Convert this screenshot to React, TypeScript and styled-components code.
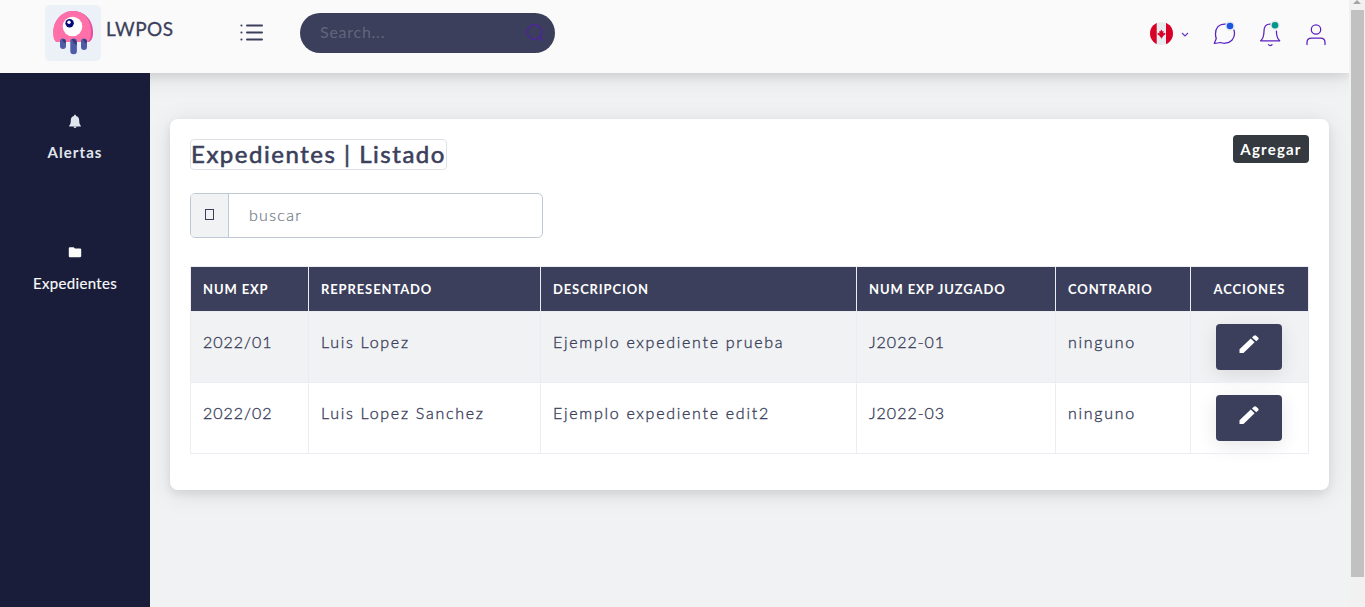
import React from "react";
import styled, { createGlobalStyle, css } from "styled-components";

const GlobalStyle = createGlobalStyle`
  * { box-sizing: border-box; }
  html, body { margin: 0; padding: 0; }
  body {
    background: #f1f2f4;
    color: #3b3f5c;
    font-family: Lato, "Liberation Sans", sans-serif;
    font-size: 16px;
    overflow: hidden;
  }
`;

const Window = styled.div`
  display: flex;
  width: 1365px;
  height: 607px;
  overflow: hidden;
`;

const Page = styled.div`
  display: flex;
  flex-direction: column;
  width: 1349px;
  height: 607px;
  overflow: hidden;
`;

const elevated = css`
  box-shadow: 0 4px 8px 0 rgba(0, 0, 0, 0.07), 0 4px 24px 0 rgba(0, 0, 0, 0.1);
`;

const Header = styled.header`
  display: flex;
  align-items: flex-start;
  flex: none;
  height: 73px;
  background: #fafafa;
  padding: 5px 22px 0 45px;
  ${elevated}
`;

const Brand = styled.div`
  display: flex;
  width: 195px;
`;

const LogoTile = styled.div`
  width: 56px;
  height: 56px;
  border-radius: 5px;
  background: #ebf1f6;
`;

const BrandName = styled.span`
  margin: 11px 0 0 5px;
  font-size: 19px;
  line-height: 26px;
  letter-spacing: 0.5px;
  -webkit-text-stroke: 0.3px #3b3f5c;
`;

const MenuToggle = styled.button`
  width: 24px;
  height: 20px;
  margin: 18px 36px 0 0;
  padding: 0;
  border: 0;
  background: none;
`;

const Search = styled.div`
  display: flex;
  align-items: center;
  justify-content: space-between;
  width: 255px;
  height: 40px;
  margin-top: 8px;
  padding: 0 11px 0 20px;
  border-radius: 20px;
  background: #3b3f5c;
  color: #60677b;
  font-size: 16px;
  letter-spacing: 0.75px;
  span { margin-top: -3px; }
`;

const Tools = styled.div`
  display: flex;
  align-items: center;
  height: 58px;
  margin-left: auto;
`;

const Tool = styled.div<{ $w: number; $gap: number }>`
  display: flex;
  justify-content: center;
  width: ${(p) => p.$w}px;
  margin-right: ${(p) => p.$gap}px;
`;

const Body = styled.div`
  display: flex;
  flex: 1;
`;

const Sidebar = styled.nav`
  position: relative;
  display: flex;
  flex-direction: column;
  align-items: center;
  width: 150px;
  background: #1a1d3a;
  padding-top: 41px;
`;

const NavItem = styled.a<{ $active?: boolean }>`
  display: flex;
  flex-direction: column;
  align-items: center;
  height: 131px;
  color: ${(p) => (p.$active ? "#e0e6ed" : "#fafafa")};
  font-size: 15px;
  font-weight: ${(p) => (p.$active ? 700 : 400)};
  letter-spacing: ${(p) => (p.$active ? 1.05 : 0.35)}px;
  line-height: 20px;
  -webkit-text-stroke: ${(p) => (p.$active ? 0 : 0.15)}px #fafafa;
  svg { margin-bottom: 13px; }
`;

const Main = styled.main`
  flex: 1;
  padding: 46px 20px 0;
`;

const Card = styled.section`
  height: 371px;
  padding: 16px 20px 0;
  border-radius: 8px;
  background: #fff;
  ${elevated}
`;

const CardHead = styled.div`
  display: flex;
  justify-content: space-between;
  align-items: flex-start;
  height: 58px;
`;

const Title = styled.h4`
  width: 257px;
  height: 31px;
  margin: 4px 0 0;
  border: 1px solid #dee2e6;
  border-radius: 4px;
  font-size: 24px;
  font-weight: 400;
  line-height: 28px;
  letter-spacing: 1.52px;
  white-space: nowrap;
  -webkit-text-stroke: 0.6px #3b3f5c;
`;

const AddButton = styled.button`
  width: 76px;
  height: 28px;
  padding: 0;
  border: 0;
  border-radius: 4px;
  background: #343a40;
  color: #fff;
  font: 700 15px/27px Lato, sans-serif;
  letter-spacing: 1.2px;
`;

const Filter = styled.div`
  display: flex;
  width: 353px;
  height: 45px;
  border: 1px solid #bfc9d4;
  border-radius: 5px;
  overflow: hidden;
`;

const FilterAddon = styled.span`
  display: flex;
  align-items: center;
  justify-content: center;
  width: 38px;
  border-right: 1px solid #bfc9d4;
  background: #f1f2f3;
`;

const MissingGlyph = styled.i`
  width: 9px;
  height: 11px;
  margin-top: -2px;
  border: 1px solid #3b3f5c;
`;

const FilterText = styled.span`
  padding-left: 20px;
  color: #6f7884;
  font-size: 16px;
  font-weight: 300;
  line-height: 42px;
  letter-spacing: 1.3px;
  -webkit-text-stroke: 0.2px #6f7884;
`;

const Table = styled.table`
  width: 1119px;
  margin-top: 28px;
  table-layout: fixed;
  border-collapse: collapse;
`;

const HeadCell = styled.th<{ $w: number; $center?: boolean }>`
  width: ${(p) => p.$w}px;
  height: 45px;
  padding: 0 12px 1px;
  border: 1px solid #ebedf2;
  background: #3b3f5c;
  color: #fff;
  font-size: 13px;
  font-weight: 700;
  letter-spacing: 0.88px;
  text-align: ${(p) => (p.$center ? "center" : "left")};
  white-space: nowrap;
`;

const Row = styled.tr`
  height: 71px;
  &:nth-child(odd) { background: #f1f2f3; }
`;

const Cell = styled.td<{ $numeric?: boolean }>`
  padding: 0 12px 11px;
  border: 1px solid #ebedf2;
  font-size: 16px;
  font-weight: 300;
  letter-spacing: ${(p) => (p.$numeric ? 0.98 : 1.72)}px;
  white-space: nowrap;
  -webkit-text-stroke: 0.35px #3b3f5c;
`;

const ActionCell = styled.td`
  padding: 0 2px 0 0;
  border: 1px solid #ebedf2;
`;

const EditButton = styled.button`
  display: block;
  width: 66px;
  height: 46px;
  margin: 0 auto;
  padding: 0 0 7px;
  border: 0;
  border-radius: 4px;
  background: #3b3f5c;
  box-shadow: 0 5px 20px 0 rgba(0, 0, 0, 0.1);
  line-height: 0;
`;

const Scrollbar = styled.div`
  display: flex;
  flex-direction: column;
  align-items: center;
  width: 16px;
  background: #f1f1f1;
`;

const ScrollArrow = styled.div`
  width: 0;
  height: 4px;
  margin-bottom: 6px;
  border: 4px solid transparent;
  border-top: 0;
  border-bottom-color: #a3a3a3;
`;

const ScrollThumb = styled.div`
  width: 13px;
  height: 567px;
  margin-left: 1px;
  background: #c1c1c1;
`;

const Logo = () => (
  <svg width="56" height="56" viewBox="0 0 56 56">
    <path d="M8.500 29C7.500 17 16 6 28 6s21 10 20 23c0 4-2 7-4 8H12c-3-1-3.500-5-3.500-8z" fill="#e44fa4" />
    <path d="M8.500 29C7.500 17 16 6 28 6c11 0 18 9 18 20 0 5-1 9-3 11H12c-3-1-3.500-5-3.500-8z" fill="#ff70a8" />
    <circle cx="27.500" cy="21.500" r="9.800" fill="#fff" />
    <circle cx="24.600" cy="18.200" r="4.200" fill="#070777" />
    <circle cx="24" cy="17.300" r="1.700" fill="#fff" />
    <path d="M15 36a3 2.500 0 0 1 6 0v5a3 3 0 0 1-6 0zM25.300 36a3.300 2.500 0 0 1 6.600 0v10a3.300 3.300 0 0 1-6.600 0zM36 36a3 2.500 0 0 1 6 0v6a3 3 0 0 1-6 0z" fill="#4f5ba8" />
    <path d="M17 34.500q4-1.500 4 3.500-3 0-4-3.500zM27 34q5-1 4.900 6-4-1-4.900-6zM38 34.200q4-1 4 4-3 0-4-4z" fill="#343d78" />
  </svg>
);

const ListIcon = () => (
  <svg width="24" height="20" fill="none" stroke="#3b3f5c" strokeWidth="2" strokeLinecap="round">
    <path d="M7 2.500h15M7 9.500h15M7 16.500h15M1.400 2.500h.1M1.400 9.500h.1M1.400 16.500h.1" />
  </svg>
);

const SearchIcon = () => (
  <svg width="18" height="18" fill="none" stroke="#4a2795" strokeWidth="1.600">
    <circle cx="8.500" cy="8" r="7.200" />
    <path d="m12.800 12 4.400 4.800" />
  </svg>
);

const Flag = () => (
  <svg width="24" height="24" viewBox="0 0 24 24">
    <clipPath id="disc"><circle cx="12.500" cy="11.500" r="11.500" /></clipPath>
    <g clipPath="url(#disc)">
      <path fill="#e8ecf0" d="M0 0h24v24H0z" />
      <path fill="#d80027" d="M0 0h7.700v24H0zM17 0h7v24h-7z" />
      <path fill="#d80027" d="m12.400 7.500 1.200 2 1-.5-.3 2.400 1.300-.7 1 1.300-2.800 2.300.2 1h-3.200l.2-1L8.200 12l1-1.300 1.300.7-.3-2.400 1 .5zM12 14h.8v2.500H12z" />
    </g>
  </svg>
);

const ChevronIcon = () => (
  <svg width="8" height="6" fill="none" stroke="#6a35c9" strokeWidth="1.200">
    <path d="m1 2 3 3 3-3" />
  </svg>
);

const ChatIcon = () => (
  <svg width="26" height="28" viewBox="0 0 26 28" fill="none" stroke="#5b21c0" strokeWidth="1.250" strokeLinejoin="round">
    <path d="M16 4H14C7.800 4 4.500 8 4.500 14c0 2 .2 3.200.8 4.500L3.300 23.500l6.200-1c1.500.7 3 .9 4.700.7 5.500-.4 9.300-4.200 9.300-9.700 0-1.600-.2-2.700-.8-4" />
    <circle cx="19" cy="6" r="4.800" fill="#e4eaf0" stroke="none" />
    <circle cx="19" cy="6" r="3.300" fill="#1b55e2" stroke="none" />
  </svg>
);

const BellIcon = () => (
  <svg width="26" height="28" viewBox="0 0 26 28" fill="none" stroke="#5b21c0" strokeWidth="1.250" strokeLinecap="round" strokeLinejoin="round">
    <path d="M14 4h-1c-4 .2-6 3.300-6 7 0 4-.8 7.500-3.300 9.800h19c-2.500-2.300-3.300-5.800-3.300-9.800M11.500 24.700q1.500 1.700 3.500 0" />
    <circle cx="18" cy="5.200" r="4.800" fill="#e4eaf0" stroke="none" />
    <circle cx="18" cy="5.200" r="3.300" fill="#009688" stroke="none" />
  </svg>
);

const UserIcon = () => (
  <svg width="20" height="24" viewBox="0 0 20 24" fill="none" stroke="#5b21c0" strokeWidth="1.250" strokeLinecap="round">
    <circle cx="10" cy="7.500" r="4.700" />
    <path d="M1 22.500v-2c0-3 2-4.300 4.500-4.300h9c2.500 0 4.500 1.300 4.500 4.300v2" />
  </svg>
);

const SolidBell = () => (
  <svg width="12" height="15" viewBox="0 0 12 15" fill="#e0e6ed">
    <path d="M6 .8c.7 0 1 .5 1 1.100 2.200.5 3.200 2.200 3.200 4.400 0 3 .4 4.200 1.600 5.300v.9H.2v-.9c1.200-1.100 1.600-2.300 1.600-5.300 0-2.200 1-3.900 3.200-4.400C5 1.300 5.300.8 6 .8zM4.500 12.800h3q-.3 1.300-1.500 1.300t-1.500-1.300z" />
  </svg>
);

const SolidFolder = () => (
  <svg width="14" height="15" viewBox="0 0 14 15" fill="#fafafa">
    <path d="M2 2.200h3.700L7 3.500h5.300c.6 0 .9.400.9.900v6.600c0 .7-.4 1.200-1 1.200H1.700c-.6 0-.9-.5-.9-1.100V3.300c0-.7.500-1.100 1.200-1.100z" />
  </svg>
);

const Pencil = () => (
  <svg width="20" height="20" viewBox="0 0 20 20" fill="#fff">
    <path d="M.5 15.300 11.800 4.600l3.800 3.700L4.500 19H.5zM13 3.500l1.800-1.800c.7-.7 1.700-.7 2.400 0l1.900 1.700c.7.700.7 1.500 0 2.200l-1.800 1.700z" />
  </svg>
);

const columns = [
  { label: "NUM EXP", width: 118 },
  { label: "REPRESENTADO", width: 232 },
  { label: "DESCRIPCION", width: 316 },
  { label: "NUM EXP JUZGADO", width: 199 },
  { label: "CONTRARIO", width: 135 },
  { label: "ACCIONES", width: 118 },
];

const records = [
  ["2022/01", "Luis Lopez", "Ejemplo expediente prueba", "J2022-01", "ninguno"],
  ["2022/02", "Luis Lopez Sanchez", "Ejemplo expediente edit2", "J2022-03", "ninguno"],
];

export default function App() {
  return (
    <Window>
      <GlobalStyle />
      <Page>
        <Header>
          <Brand>
            <LogoTile><Logo /></LogoTile>
            <BrandName>LWPOS</BrandName>
          </Brand>
          <MenuToggle aria-label="Menu"><ListIcon /></MenuToggle>
          <Search><span>Search...</span><SearchIcon /></Search>
          <Tools>
            <Tool $w={24} $gap={8}><Flag /></Tool>
            <Tool $w={8} $gap={22}><ChevronIcon /></Tool>
            <Tool $w={26} $gap={20}><ChatIcon /></Tool>
            <Tool $w={26} $gap={23}><BellIcon /></Tool>
            <Tool $w={20} $gap={1}><UserIcon /></Tool>
          </Tools>
        </Header>
        <Body>
          <Sidebar>
            <NavItem $active><SolidBell /><span>Alertas</span></NavItem>
            <NavItem><SolidFolder /><span>Expedientes</span></NavItem>
          </Sidebar>
          <Main>
            <Card>
              <CardHead>
                <Title>Expedientes | Listado</Title>
                <AddButton>Agregar</AddButton>
              </CardHead>
              <Filter>
                <FilterAddon><MissingGlyph /></FilterAddon>
                <FilterText>buscar</FilterText>
              </Filter>
              <Table>
                <thead>
                  <tr>
                    {columns.map((c, i) => (
                      <HeadCell key={c.label} $w={c.width} $center={i === 5}>{c.label}</HeadCell>
                    ))}
                  </tr>
                </thead>
                <tbody>
                  {records.map((r) => (
                    <Row key={r[0]}>
                      {r.map((text, i) => (
                        <Cell key={text} $numeric={i === 0 || i === 3}>{text}</Cell>
                      ))}
                      <ActionCell><EditButton aria-label="Editar"><Pencil /></EditButton></ActionCell>
                    </Row>
                  ))}
                </tbody>
              </Table>
            </Card>
          </Main>
        </Body>
      </Page>
      <Scrollbar><ScrollArrow /><ScrollThumb /></Scrollbar>
    </Window>
  );
}
